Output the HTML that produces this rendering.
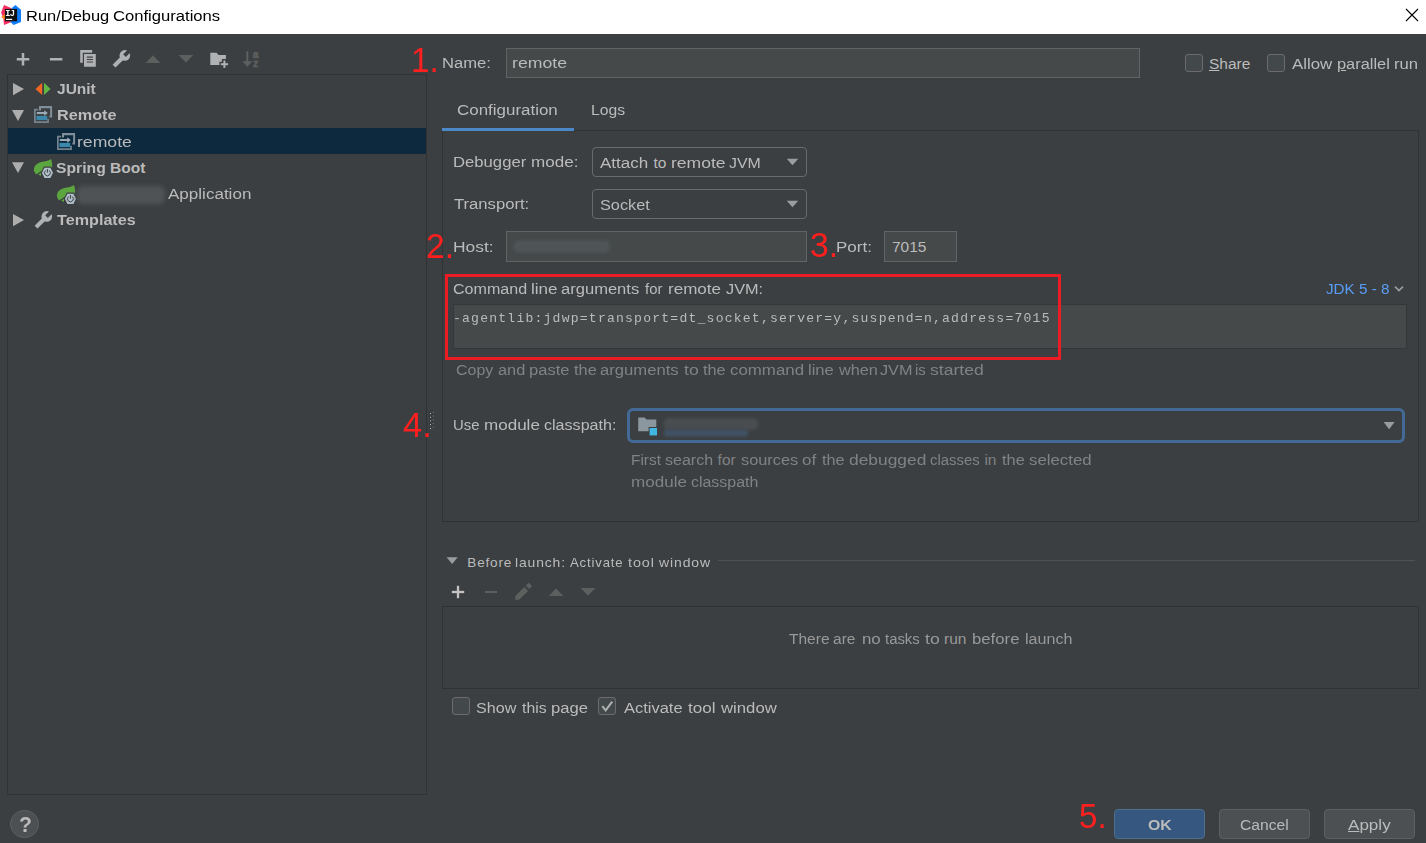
<!DOCTYPE html>
<html><head><meta charset="utf-8"><title>Run/Debug Configurations</title>
<style>
html,body{margin:0;padding:0;}
body{width:1426px;height:843px;overflow:hidden;background:#3c3f41;position:relative;font-family:"Liberation Sans",sans-serif;font-size:15.5px;color:#bbbbbb;}
.a{position:absolute;white-space:nowrap;line-height:20px;}
.t{position:absolute;white-space:nowrap;line-height:20px;height:20px;transform-origin:0 0;}
#titlebar{left:0;top:0;width:1426px;height:34px;background:#fff;}
.red{color:#ff1f1f;font-size:35px;line-height:36px;height:36px;}
.field{position:absolute;background:#45494a;border:1px solid #616365;box-sizing:border-box;}
.combo{position:absolute;background:#3c3f41;border:1px solid #6a6a6a;border-radius:4px;box-sizing:border-box;}
.cb{position:absolute;width:18px;height:18px;box-sizing:border-box;border:1px solid #6b6b6b;border-radius:3px;background:#43494a;}
.hint{color:#808283;}
.btn{position:absolute;top:809px;width:91px;height:30px;box-sizing:border-box;border:1px solid #5e6060;border-radius:4px;background:#4c5052;}
</style></head><body>
<div class="a" id="titlebar"></div>
<div class="t" id="title_0" style="left:25.8px;top:6px;color:#000;transform:scaleX(1.0619);">Run/Debug</div>
<div class="t" id="title_1" style="left:113.0px;top:6px;color:#000;transform:scaleX(1.0722);">Configurations</div>

<!-- tree -->
<div class="a" id="tree" style="left:7px;top:74px;width:420px;height:721px;box-sizing:border-box;border:1px solid #323232;"></div>
<div class="a" id="sel" style="left:8px;top:128px;width:418px;height:26px;background:#0d293e;"></div>
<div class="t" id="tr1" style="left:57.2px;top:79px;font-weight:bold;transform:scaleX(1.0007);">JUnit</div>
<div class="t" id="tr2" style="left:56.9px;top:105px;font-weight:bold;transform:scaleX(1.0478);">Remote</div>
<div class="t" id="tr3" style="left:76.6px;top:132px;transform:scaleX(1.1367);">remote</div>
<div class="t" id="tr4_0" style="left:55.9px;top:158px;font-weight:bold;transform:scaleX(1.0137);">Spring</div>
<div class="t" id="tr4_1" style="left:110.1px;top:158px;font-weight:bold;transform:scaleX(1.0000);">Boot</div>
<div class="t" id="tr5" style="left:168.1px;top:184px;transform:scaleX(1.0993);">Application</div>
<div class="t" id="tr6" style="left:56.9px;top:210px;font-weight:bold;transform:scaleX(1.0424);">Templates</div>

<!-- name row -->
<div class="t red" id="n1" style="left:411.1px;top:42px;transform:scaleX(0.9500);">1.</div>
<div class="t" id="lname" style="left:441.6px;top:53px;transform:scaleX(1.0708);">Name:</div>
<div class="field" id="fname" style="left:506px;top:48px;width:634px;height:30px;"></div>
<div class="t" id="vname" style="left:511.9px;top:53px;transform:scaleX(1.1400);">remote</div>
<div class="cb" style="left:1185px;top:54px;"></div>
<div class="t" id="lshare" style="left:1209.0px;top:54px;transform:scaleX(1.0000);"><u>S</u>hare</div>
<div class="cb" style="left:1267px;top:54px;"></div>
<div class="t" id="lallow_0" style="left:1291.5px;top:54px;transform:scaleX(1.0846);">Allow</div>
<div class="t" id="lallow_1" style="left:1337.4px;top:54px;transform:scaleX(1.0571);"><u>p</u>arallel</div>
<div class="t" id="lallow_2" style="left:1393.9px;top:54px;transform:scaleX(1.0762);">run</div>

<!-- tabs -->
<div class="t" id="tab1" style="left:457.4px;top:100px;transform:scaleX(1.0930);">Configuration</div>
<div class="t" id="tab2" style="left:590.5px;top:100px;transform:scaleX(1.0140);">Logs</div>
<div class="a" id="panel" style="left:442px;top:130px;width:977px;height:392px;box-sizing:border-box;border:1px solid #323232;"></div>
<div class="a" style="left:442px;top:128px;width:132px;height:3px;background:#4a88c7;"></div>

<div class="t" id="ldbg_0" style="left:452.9px;top:152px;transform:scaleX(1.0759);">Debugger</div>
<div class="t" id="ldbg_1" style="left:530.9px;top:152px;transform:scaleX(1.1000);">mode:</div>
<div class="combo" style="left:592px;top:147px;width:215px;height:30px;"></div>
<div class="t" id="vdbg_0" style="left:600.2px;top:153px;transform:scaleX(1.1000);">Attach</div>
<div class="t" id="vdbg_1" style="left:653.4px;top:153px;transform:scaleX(1.0000);">to</div>
<div class="t" id="vdbg_2" style="left:670.9px;top:153px;transform:scaleX(1.1324);">remote</div>
<div class="t" id="vdbg_3" style="left:728.9px;top:153px;transform:scaleX(1.0262);">JVM</div>
<div class="t" id="ltr" style="left:453.8px;top:194px;transform:scaleX(1.0733);">Transport:</div>
<div class="combo" style="left:592px;top:189px;width:215px;height:30px;"></div>
<div class="t" id="vtr" style="left:599.9px;top:195px;transform:scaleX(1.0511);">Socket</div>
<div class="t red" id="n2" style="left:425.9px;top:228px;transform:scaleX(0.9600);">2.</div>
<div class="t" id="lhost" style="left:453.0px;top:237px;transform:scaleX(1.1238);">Host:</div>
<div class="field" style="left:506px;top:231px;width:301px;height:31px;"></div>
<div class="t red" id="n3" style="left:810.0px;top:227px;transform:scaleX(0.9600);">3.</div>
<div class="t" id="lport" style="left:836.2px;top:237px;transform:scaleX(1.1000);">Port:</div>
<div class="field" style="left:884px;top:231px;width:73px;height:31px;"></div>
<div class="t" id="vport" style="left:891.9px;top:237px;transform:scaleX(1.0000);">7015</div>

<div class="t" id="lcmd_0" style="left:452.9px;top:279px;transform:scaleX(1.0371);">Command</div>
<div class="t" id="lcmd_1" style="left:530.8px;top:279px;transform:scaleX(1.1000);">line</div>
<div class="t" id="lcmd_2" style="left:561.0px;top:279px;transform:scaleX(1.0679);">arguments</div>
<div class="t" id="lcmd_3" style="left:645.1px;top:279px;transform:scaleX(0.9600);">for</div>
<div class="t" id="lcmd_4" style="left:668.2px;top:279px;transform:scaleX(1.1000);">remote</div>
<div class="t" id="lcmd_5" style="left:726.0px;top:279px;transform:scaleX(1.0500);">JVM:</div>
<div class="t" id="jdk" style="left:1326.0px;top:279px;color:#589df6;transform:scaleX(0.9828);">JDK 5 - 8</div>
<div class="field" style="left:453px;top:304px;width:954px;height:45px;border-color:#353739;"></div>
<div class="t" id="vcmd" style="left:453.2px;top:309px;font-family:'Liberation Mono',monospace;font-size:13px;letter-spacing:1.2px;transform:scaleX(1.0061);">-agentlib:jdwp=transport=dt_socket,server=y,suspend=n,address=7015</div>
<div class="a" style="left:445px;top:274px;width:616px;height:86px;box-sizing:border-box;border:3px solid #ec1c24;"></div>
<div class="t hint" id="hcopy_0" style="left:456.0px;top:360px;transform:scaleX(1.0294);">Copy</div>
<div class="t hint" id="hcopy_1" style="left:497.7px;top:360px;transform:scaleX(1.0542);">and</div>
<div class="t hint" id="hcopy_2" style="left:528.7px;top:360px;transform:scaleX(1.0667);">paste</div>
<div class="t hint" id="hcopy_3" style="left:574.0px;top:360px;transform:scaleX(1.0571);">the</div>
<div class="t hint" id="hcopy_4" style="left:600.4px;top:360px;transform:scaleX(1.0745);">arguments</div>
<div class="t hint" id="hcopy_5" style="left:684.1px;top:360px;transform:scaleX(1.1400);">to</div>
<div class="t hint" id="hcopy_6" style="left:702.8px;top:360px;transform:scaleX(1.0476);">the</div>
<div class="t hint" id="hcopy_7" style="left:730.2px;top:360px;transform:scaleX(1.0876);">command</div>
<div class="t hint" id="hcopy_8" style="left:808.0px;top:360px;transform:scaleX(1.0696);">line</div>
<div class="t hint" id="hcopy_9" style="left:839.0px;top:360px;transform:scaleX(1.0492);">when</div>
<div class="t hint" id="hcopy_10" style="left:880.1px;top:360px;transform:scaleX(1.0474);">JVM</div>
<div class="t hint" id="hcopy_11" style="left:915.2px;top:360px;transform:scaleX(0.9600);">is</div>
<div class="t hint" id="hcopy_12" style="left:929.8px;top:360px;transform:scaleX(1.1330);">started</div>

<div class="t red" id="n4" style="left:402.9px;top:407px;transform:scaleX(0.9856);">4.</div>
<div class="t" id="lmod_0" style="left:453.1px;top:415px;transform:scaleX(0.9600);">Use</div>
<div class="t" id="lmod_1" style="left:484.0px;top:415px;transform:scaleX(1.0988);">module</div>
<div class="t" id="lmod_2" style="left:544.1px;top:415px;transform:scaleX(1.0384);">classpath:</div>
<div class="a" id="modc" style="left:627px;top:408px;width:778px;height:34.6px;box-sizing:border-box;border:3.8px solid #436a96;border-radius:6px;"></div>
<div class="t hint" id="h1_0" style="left:631.3px;top:450px;transform:scaleX(0.9943);">First</div>
<div class="t hint" id="h1_1" style="left:665.4px;top:450px;transform:scaleX(1.0352);">search</div>
<div class="t hint" id="h1_2" style="left:717.6px;top:450px;transform:scaleX(1.0000);">for</div>
<div class="t hint" id="h1_3" style="left:741.0px;top:450px;transform:scaleX(1.0531);">sources</div>
<div class="t hint" id="h1_4" style="left:801.9px;top:450px;transform:scaleX(1.1000);">of</div>
<div class="t hint" id="h1_5" style="left:822.0px;top:450px;transform:scaleX(1.0476);">the</div>
<div class="t hint" id="h1_6" style="left:848.7px;top:450px;transform:scaleX(1.1208);">debugged</div>
<div class="t hint" id="h1_7" style="left:929.5px;top:450px;transform:scaleX(0.9600);">classes</div>
<div class="t hint" id="h1_8" style="left:984.4px;top:450px;transform:scaleX(1.0000);">in</div>
<div class="t hint" id="h1_9" style="left:1001.7px;top:450px;transform:scaleX(1.0571);">the</div>
<div class="t hint" id="h1_10" style="left:1028.6px;top:450px;transform:scaleX(1.0847);">selected</div>
<div class="t hint" id="h2_0" style="left:631.2px;top:472px;transform:scaleX(1.1000);">module</div>
<div class="t hint" id="h2_1" style="left:691.0px;top:472px;transform:scaleX(1.0281);">classpath</div>

<!-- before launch -->
<div class="t" id="bl_0" style="left:467.3px;top:553px;font-size:13.5px;letter-spacing:0.85px;transform:scaleX(1.0000);">Before</div>
<div class="t" id="bl_1" style="left:515.2px;top:553px;font-size:13.5px;letter-spacing:0.85px;transform:scaleX(1.0298);">launch:</div>
<div class="t" id="bl_2" style="left:569.5px;top:553px;font-size:13.5px;letter-spacing:0.85px;transform:scaleX(0.9741);">Activate</div>
<div class="t" id="bl_3" style="left:628.2px;top:553px;font-size:13.5px;letter-spacing:0.85px;transform:scaleX(1.0677);">tool</div>
<div class="t" id="bl_4" style="left:658.7px;top:553px;font-size:13.5px;letter-spacing:0.85px;transform:scaleX(1.0363);">window</div>
<div class="a" style="left:718px;top:560px;width:697px;height:1px;background:#515151;"></div>
<div class="a" id="tasks" style="left:442px;top:606px;width:977px;height:83px;box-sizing:border-box;border:1px solid #323232;"></div>
<div class="t" id="notask_0" style="left:789.0px;top:629px;color:#999;transform:scaleX(1.0006);">There</div>
<div class="t" id="notask_1" style="left:833.0px;top:629px;color:#999;transform:scaleX(1.0022);">are</div>
<div class="t" id="notask_2" style="left:861.6px;top:629px;color:#999;transform:scaleX(1.0875);">no</div>
<div class="t" id="notask_3" style="left:884.8px;top:629px;color:#999;transform:scaleX(0.9600);">tasks</div>
<div class="t" id="notask_4" style="left:924.9px;top:629px;color:#999;transform:scaleX(1.1400);">to</div>
<div class="t" id="notask_5" style="left:944.0px;top:629px;color:#999;transform:scaleX(1.0000);">run</div>
<div class="t" id="notask_6" style="left:971.9px;top:629px;color:#999;transform:scaleX(1.0799);">before</div>
<div class="t" id="notask_7" style="left:1025.0px;top:629px;color:#999;transform:scaleX(1.0386);">launch</div>
<div class="cb" style="left:452px;top:697px;"></div>
<div class="t" id="lshow_0" style="left:475.9px;top:698px;transform:scaleX(1.0386);">Show</div>
<div class="t" id="lshow_1" style="left:522.3px;top:698px;transform:scaleX(1.0185);">this</div>
<div class="t" id="lshow_2" style="left:550.7px;top:698px;transform:scaleX(1.0718);">page</div>
<div class="cb" style="left:598px;top:697px;"></div>
<div class="t" id="lact_0" style="left:623.8px;top:698px;transform:scaleX(1.0617);">Activate</div>
<div class="t" id="lact_1" style="left:688.3px;top:698px;transform:scaleX(1.1000);">tool</div>
<div class="t" id="lact_2" style="left:721.2px;top:698px;transform:scaleX(1.0793);">window</div>

<!-- buttons -->
<div class="t red" id="n5" style="left:1078.6px;top:798px;transform:scaleX(0.9440);">5.</div>
<div class="btn" style="left:1114px;background:#365880;border-color:#4c708c;"></div>
<div class="t" id="bok" style="left:1147.5px;top:815px;font-weight:bold;transform:scaleX(1.0214);">OK</div>
<div class="btn" style="left:1219px;"></div>
<div class="t" id="bcancel" style="left:1240.4px;top:815px;transform:scaleX(1.0095);">Cancel</div>
<div class="btn" style="left:1324px;"></div>
<div class="t" id="bapply" style="left:1348.1px;top:815px;transform:scaleX(1.1000);"><u>A</u>pply</div>
<div class="a" style="left:10px;top:810px;width:29px;height:28px;box-sizing:border-box;border:1px solid #5e6060;border-radius:14.5px;background:#4c5052;"></div>
<div class="t" id="q" style="left:18.9px;top:813px;font-weight:bold;font-size:22px;line-height:24px;height:24px;transform:scaleX(0.9633);">?</div>
<!--ICONS1-->
<svg class="a" id="icons" style="left:0;top:0;pointer-events:none" width="1426" height="843" viewBox="0 0 1426 843">
<!-- IJ logo -->
<polygon points="4,4.9 11.6,8.3 11.6,22 4,25 3.4,19 1.1,12.6" fill="#fb2f63"/>
<polygon points="1.2,17 4.8,13.8 4.8,19.8" fill="#fc8c1d"/>
<polygon points="15.4,4.9 21,9.7 21,22 13.6,25 10.5,22 11.8,8" fill="#0f7dfa"/>
<rect x="4.9" y="8.9" width="12.2" height="12.4" fill="#111"/>
<text x="5.3" y="15.9" font-family="Liberation Mono, monospace" font-weight="bold" font-size="8.6" fill="#fff" opacity="0.99">I</text><text x="10.1" y="15.9" font-family="Liberation Sans, sans-serif" font-weight="bold" font-size="8.4" fill="#fff" opacity="0.99">J</text>
<rect x="6" y="18.8" width="6.2" height="1.2" fill="#fff"/>
<!-- close -->
<path d="M1406 9L1418 21M1418 9L1406 21" stroke="#000" stroke-width="1.1" fill="none"/>

<!-- toolbar -->
<g fill="#afb1b3">
<rect x="21.75" y="53" width="2.5" height="12.5"/><rect x="16.75" y="58" width="12.5" height="2.5"/>
<rect x="49.9" y="58" width="12.5" height="2.5"/>
<path d="M80.2 50H92.2V52.7H82.8V62.8H80.2Z"/>
<path d="M84 53.9H95.8V66.7H84Z M86.8 56.6V57.7H92.9V56.6Z M86.8 59V60.1H92.9V59Z M86.8 61.4V62.5H92.9V61.4Z" fill-rule="evenodd"/>
<path d="M210.3 52.7H216.6L218.4 55H225.9V59.1H221.9V61.8H219.4V65.1H210.3Z"/>
<rect x="223.4" y="60.5" width="2" height="7.4"/><rect x="220.8" y="63.2" width="7.3" height="2"/>
</g>
<g id="wr1">
<path d="M114.05 66.1L122.5 57.7" stroke="#afb1b3" stroke-width="4.1" stroke-linecap="butt" fill="none"/>
<circle cx="124.8" cy="55.4" r="5.3" fill="#afb1b3"/>
<rect x="-0.4" y="-1.9" width="8" height="3.8" transform="translate(124.8,55.4) rotate(-45)" fill="#3c3f41"/>
</g>
<g fill="#5e6060">
<polygon points="145.7,63 160.3,63 153,55.2"/>
<polygon points="178.6,54.9 193.3,54.9 186,62.5"/>
<rect x="246.3" y="51.3" width="2" height="12"/>
<polygon points="242.3,61.3 252.3,61.3 247.3,66.8"/>
<text x="252.7" y="57.7" font-family="Liberation Sans, sans-serif" font-weight="bold" font-size="10.5" stroke="#5e6060" stroke-width="0.5">a</text>
<text x="253.1" y="66.5" font-family="Liberation Sans, sans-serif" font-weight="bold" font-size="10.5" stroke="#5e6060" stroke-width="0.5">z</text>
</g>

<!-- tree arrows -->
<g fill="#adadad">
<polygon points="13,83 13,95.2 24,89.1"/>
<polygon points="12,110 24,110 18,121"/>
<polygon points="12,162.3 24,162.3 18,173"/>
<polygon points="13,214 13,226.2 24,220.1"/>
</g>
<!-- junit -->
<polygon points="42.2,82.7 42.2,95.1 35.5,88.9" fill="#f26522"/>
<polygon points="44,82.7 44,95.1 50.6,88.9" fill="#62b543"/>
<!-- remote icons -->
<g id="rem">
<path d="M39 106H52.1V117.5H49.4V115.6H50.1V108.3H41V110.6H39Z" fill="#7f8e99"/>
<path d="M34 108.8H38.2V110.5H35.7V121.2H47.2V118.8H48.9V122.9H34Z" fill="#74838e"/>
<rect x="36.4" y="115.9" width="10.8" height="4.2" fill="#3b89aa"/>
<path d="M36.8 112.1H44.2V110.3L47.9 113.1L44.2 115.9V114H36.8Z" fill="#9aa9b3"/>
</g>
<use href="#rem" x="23" y="27"/>
<!-- spring boot icons -->
<g id="sb">
<path d="M51 158.9C48.5 161 45 161.3 41.5 162C37 163 34 166 33.9 169.4C33.9 171.5 35 173.2 36.4 174.3L43 170L45 167.5H52.1C52.4 164 51.8 161 51 158.9Z" fill="#5ca63f"/>
<polygon points="38.2,174.4 41,172.8 41,176" fill="#5ca63f"/>
<polygon points="43.9,166.6 51,166.6 54.1,172.8 51,179 43.9,179 40.8,172.8" fill="#3c3f41"/>
<polygon points="44.5,167.7 50.4,167.7 53,172.8 50.4,177.9 44.5,177.9 41.9,172.8" fill="#afbec8"/>
<path d="M45.6 170.6A2.9 2.9 0 1 0 49.2 170.6" fill="none" stroke="#3c3f41" stroke-width="1"/>
<rect x="46.9" y="169.1" width="1" height="3.5" fill="#3c3f41"/>
</g>
<use href="#sb" x="23" y="26"/>
<!-- wrench in tree -->
<use href="#wr1" x="-78" y="161"/>
</svg>
<!--/ICONS1-->
<!--ICONS2-->
<svg class="a" id="icons2" style="left:0;top:0;pointer-events:none" width="1426" height="843" viewBox="0 0 1426 843">
<defs><filter id="bl1" x="-20%" y="-50%" width="140%" height="200%"><feGaussianBlur stdDeviation="2"/></filter>
<filter id="bl2" x="-20%" y="-50%" width="140%" height="200%"><feGaussianBlur stdDeviation="1.5"/></filter></defs>
<!-- blurred (redacted) regions -->
<rect x="77" y="186" width="88" height="18" rx="6" fill="#4f5355" filter="url(#bl1)"/>
<rect x="514" y="240.5" width="96" height="12" rx="5" fill="#4f5456" filter="url(#bl2)"/>
<rect x="664" y="418.5" width="94" height="11" rx="4" fill="#4a4d4f" filter="url(#bl2)"/>
<rect x="664" y="429.5" width="84" height="7" rx="3" fill="#3f5165" filter="url(#bl2)"/>
<!-- combo arrows -->
<g fill="#9a9da0">
<polygon points="786.8,158.8 798.2,158.8 792.5,165.2"/>
<polygon points="786.8,200.8 798.2,200.8 792.5,207.2"/>
<polygon points="1383.6,422 1394.6,422 1389.1,429.2"/>
<polygon points="446.6,557.2 457.7,557.2 452.15,563.9"/>
</g>
<path d="M1395 286.6L1399 290.6L1403 286.6" fill="none" stroke="#9a9da0" stroke-width="1.6"/>
<!-- module folder -->
<path d="M638.2 417.4H644.6L646.4 419.6H656.3V427H648.6V431.3H638.2Z" fill="#8b979e"/>
<rect x="649.6" y="428" width="7.4" height="7.4" fill="#40b6e0"/>
<!-- before launch toolbar -->
<g fill="#c4c4c4"><rect x="456.85" y="585.8" width="2.3" height="12.4"/><rect x="451.8" y="590.85" width="12.4" height="2.3"/></g>
<g fill="#5e6060">
<rect x="485" y="591" width="12" height="2"/>
<polygon points="524.3,587.1 528.1,590.9 519.4,599.6 515.3,599.9 515.4,596"/>
<polygon points="525.9,585.4 528.7,582.8 532.1,586.3 529.3,589.1"/>
<polygon points="548.8,596 563.3,596 556,588.4"/>
<polygon points="580.7,588 595.4,588 588,595.5"/>
</g>
<!-- check -->
<path d="M602.3 706.2L605.7 710.4L612.2 701.6" fill="none" stroke="#b0b0b0" stroke-width="2"/>
<!-- splitter dots -->
<g fill="#bdbdbd"><rect x="430" y="413" width="1" height="1"/><rect x="430" y="416.8" width="1" height="1"/><rect x="430" y="420.4" width="1" height="1"/><rect x="430" y="424.2" width="1" height="1"/><rect x="430" y="428" width="1" height="1"/></g>
<g fill="#777"><rect x="432.6" y="411.6" width="1.2" height="1"/><rect x="432.6" y="415.4" width="1.2" height="1"/><rect x="432.6" y="419.2" width="1.2" height="1"/><rect x="432.6" y="423" width="1.2" height="1"/><rect x="432.6" y="426.6" width="1.2" height="1"/></g>
<g fill="#2b2b2b"><rect x="429" y="412" width="1" height="1"/><rect x="429" y="415.8" width="1" height="1"/><rect x="429" y="419.4" width="1" height="1"/><rect x="429" y="423.2" width="1" height="1"/><rect x="429" y="427" width="1" height="1"/><rect x="431.6" y="410.6" width="1" height="1"/><rect x="431.6" y="414.4" width="1" height="1"/><rect x="431.6" y="418.2" width="1" height="1"/><rect x="431.6" y="422" width="1" height="1"/><rect x="431.6" y="425.6" width="1" height="1"/></g>
</svg>
<!--/ICONS2-->
</body></html>
